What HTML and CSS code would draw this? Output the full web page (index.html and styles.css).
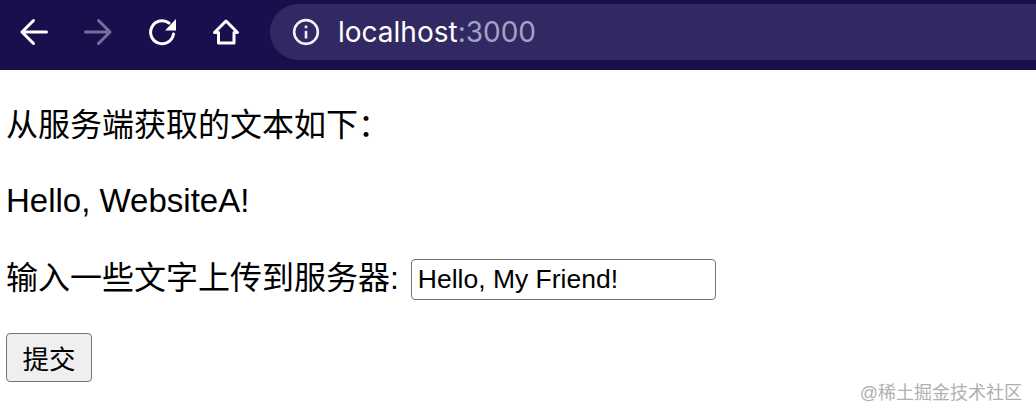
FILE: index.html
```html
<!DOCTYPE html>
<html lang="en">
<head>
  <meta charset="UTF-8">
  <title>localhost:3000</title>
  <link rel="stylesheet" href="styles.css">
</head>
<body>
  <div class="toolbar">
    <div class="nav-icons">
      <svg class="nav-icon" viewBox="0 0 32 32"><path d="M28.500 16H4M15.500 4.500 4 16 15.500 27.500"/></svg>
      <svg class="nav-icon disabled" viewBox="0 0 32 32"><path d="M3.500 16H28M16.500 4.500 28 16 16.500 27.500"/></svg>
      <svg class="nav-icon" viewBox="0 0 32 32"><path d="M27.500 18A11.500 11.500 0 1 1 23 7"/><path class="solid" d="M19 14.500H30V3z"/></svg>
      <svg class="nav-icon" viewBox="0 0 32 32"><path d="M4.500 16.500 16 5 27.500 16.500H24V27H8.500V16.500z"/></svg>
    </div>
    <div class="address-bar">
      <svg class="info-icon" viewBox="0 0 26 26"><circle cx="13" cy="13" r="11"/><path d="M13 12v7"/><path d="M13 7v2.500"/></svg>
      <span class="host">localhost<span class="port">:3000</span></span>
    </div>
  </div>

  <div class="content">
    <p>从服务端获取的文本如下：</p>
    <p class="greeting">Hello, WebsiteA!</p>
    <p>输入一些文字上传到服务器: <input class="text-input" type="text" value="Hello, My Friend!"></p>
    <button class="submit-button">提交</button>
  </div>

  <div class="watermark">@稀土掘金技术社区</div>
</body>
</html>
```

FILE: styles.css
```css
* {
  box-sizing: border-box;
}

body {
  margin: 0;
  height: 418px;
  overflow: hidden;
  position: relative;
  background: #fff;
  color: #000;
  font-family: "Liberation Sans", "Noto Sans CJK SC", sans-serif;
}

.toolbar {
  display: flex;
  align-items: center;
  height: 70px;
  padding: 4px 0 10px 18px;
  background: #1a0f4d;
}

.nav-icons {
  display: flex;
  align-items: center;
  gap: 32px;
  width: 252px;
  margin-top: -1px;
}

.nav-icon {
  width: 32px;
  height: 32px;
  fill: none;
  stroke: #fff;
  stroke-width: 3;
  stroke-linecap: round;
  stroke-linejoin: round;
}

.nav-icon.disabled {
  stroke: #75709a;
}

.nav-icon .solid {
  fill: #fff;
  stroke: none;
}

.address-bar {
  display: flex;
  align-items: center;
  flex: 1;
  height: 56px;
  padding-left: 22px;
  background: #312961;
  border-radius: 28px 0 0 28px;
}

.info-icon {
  width: 28px;
  height: 28px;
  margin-right: 18px;
  fill: none;
  stroke: #f1f0f6;
  stroke-width: 2.400;
}

.host {
  font-family: Inter, "Liberation Sans", sans-serif;
  font-size: 28px;
  color: #fff;
}

.port {
  color: #a5a1c4;
}

.content {
  padding: 36px 6px 0;
  font-size: 32px;
  line-height: 38px;
}

.content p {
  margin: 0 0 38px;
}

.content .greeting {
  margin-bottom: 39px;
  font-size: 33px;
}

.text-input {
  width: 305px;
  height: 41px;
  margin-left: 3px;
  padding: 0 6px;
  border: 1.500px solid #767676;
  border-radius: 4px;
  font-family: inherit;
  font-size: 26.500px;
  vertical-align: 1px;
}

.submit-button {
  display: block;
  width: 86px;
  height: 49px;
  margin-top: -5px;
  padding: 0;
  background: #efefef;
  border: 1.500px solid #767676;
  border-radius: 4px;
  font-family: inherit;
  font-size: 26.500px;
  color: #000;
}

.watermark {
  position: absolute;
  right: 14px;
  bottom: 12px;
  font-size: 18px;
  line-height: 26px;
  color: #b0b0b0;
}
```
